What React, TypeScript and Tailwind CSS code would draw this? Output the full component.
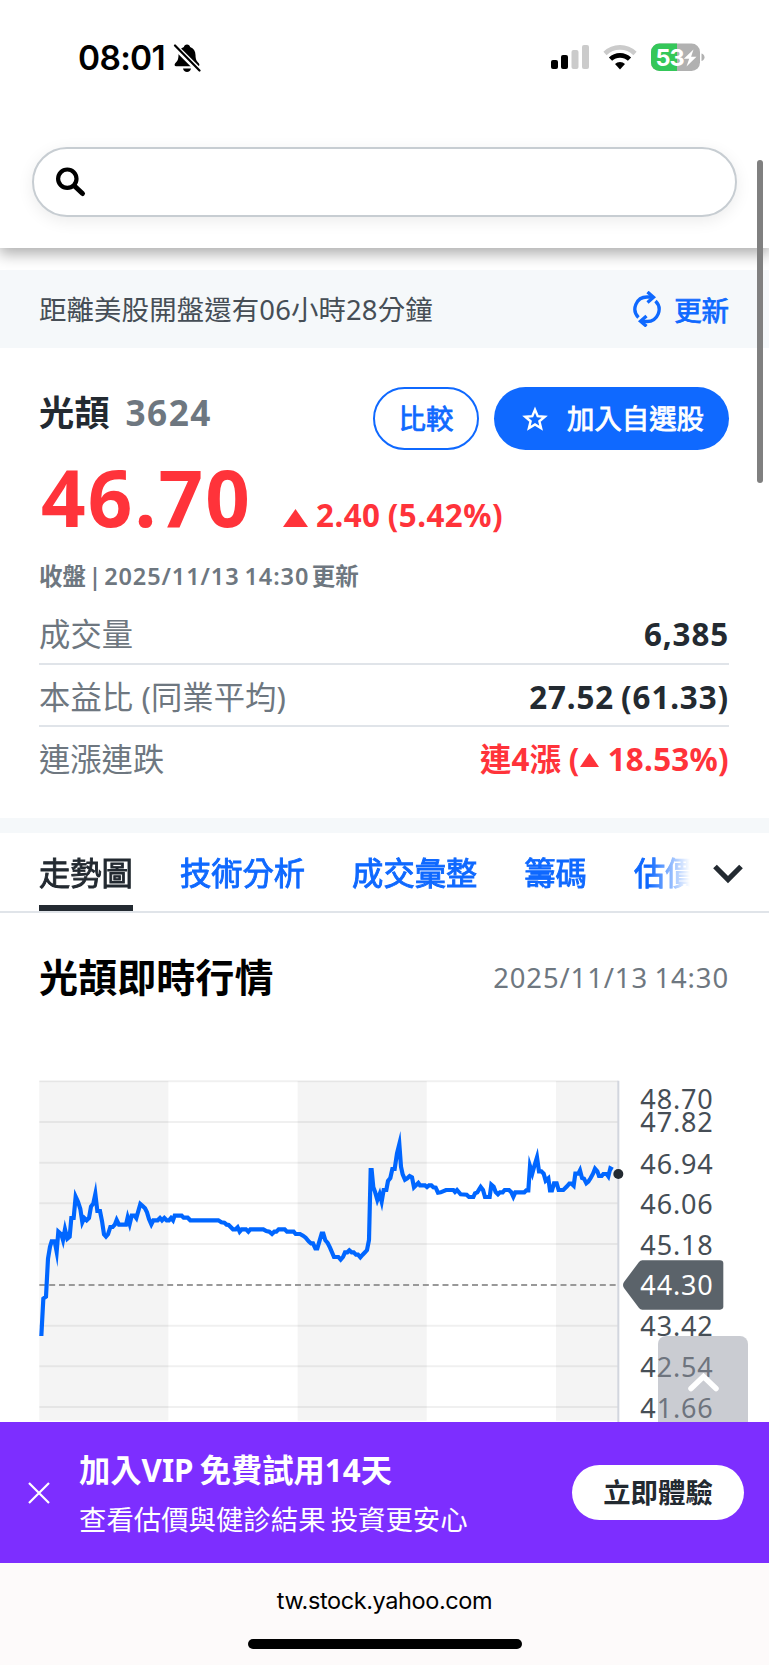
import { useState } from "react";
import clsx from "clsx";

const TABS = ["走勢圖", "技術分析", "成交彙整", "籌碼", "估價"];

const STATS = [
  { label: "成交量", value: "6,385" },
  { label: "本益比 (同業平均)", value: "27.52 (61.33)" },
];

// chart units are a third of a pixel
const GRID_LINES = [64, 186, 308, 430, 552, 797, 919, 1041];

const BANDS = [
  { x: 118, width: 387 },
  { x: 893, width: 387 },
  { x: 1668, width: 187 },
];

const PRICE_LABELS = [
  { y: 148, text: "48.70" },
  { y: 217, text: "47.82" },
  { y: 341, text: "46.94" },
  { y: 462, text: "46.06" },
  { y: 585, text: "45.18" },
  { y: 829, text: "43.42" },
  { y: 950, text: "42.54" },
  { y: 1073, text: "41.66" },
];

const MORNING =
  "124,828 130,716 138,710 144,596 150,560 155,544 164,544 170,575 175,515 184,523 189,540 195,508 202,536 209,530 214,474 221,474 227,410 234,425 241,447 247,487 253,474 260,481 267,474 273,440 280,430 286,402 292,453 300,453 306,483 312,523 318,530 324,523 331,501 338,501 345,493 350,480 357,494 378,494 383,472 389,492 395,467 404,467 409,474 421,432 428,438 435,445 441,457 447,477 454,493 460,481 473,481 480,474 486,481 493,474 500,481 507,481 513,474 519,481 524,467 545,467 551,473 563,473 571,481 655,481 664,487 673,488 680,494 686,495 699,508 707,508 713,502 719,515 725,508 738,508 745,515 751,508 790,508 799,513 808,515 816,522 823,515 829,515 836,508 854,508 861,515 881,515 887,522 900,522 909,527 917,533 926,544 933,550 939,550 946,565 952,565 965,521 970,521 976,541 983,549 990,563 1002,591 1015,591 1022,599 1029,591 1035,577 1042,577 1048,571 1055,577 1061,577 1068,584 1074,584 1081,592 1088,584 1095,577 1101,570 1107,540 1112,330";

const AFTERNOON =
  "1115,330 1120,382 1125,395 1132,420 1139,402 1145,425 1151,390 1159,390 1164,363 1171,354 1177,327 1184,327 1191,280 1198,252 1203,320 1208,343 1215,359 1222,355 1229,348 1236,352 1242,382 1248,376 1255,369 1260,376 1275,376 1281,381 1287,376 1294,376 1300,382 1307,383 1314,398 1322,397 1338,390 1360,390 1365,396 1371,390 1382,403 1400,404 1407,411 1420,411 1425,400 1432,397 1442,381 1449,390 1455,411 1469,411 1474,374 1481,380 1487,396 1494,403 1500,397 1508,397 1514,390 1527,390 1534,397 1540,410 1546,397 1573,397 1579,391 1585,391 1590,318 1597,340 1603,318 1611,292 1617,334 1624,334 1631,341 1637,362 1645,355 1650,391 1656,391 1662,370 1670,370 1676,390 1690,390 1701,379 1708,371 1715,371 1721,377 1726,341 1735,341 1740,331 1746,354 1752,356 1759,370 1765,365 1772,354 1779,341 1785,326 1792,334 1797,348 1805,348 1810,342 1820,342 1825,349 1831,325 1838,329";

function StatusBar() {
  return (
    <div className="flex h-[147px] items-start justify-between pt-[42px] pr-[64px] pl-[78px]">
      <div className="flex items-center">
        <span className="w-[95px] pt-px text-[33.5px] leading-[30px] font-semibold tracking-[-0.7px] text-black font-['Inter',sans-serif]">
          08:01
        </span>
        <svg width="28" height="30" viewBox="0 0 28 30" className="text-black">
          <path
            d="M14 1.6c-1.8 0-2.8 1-3.1 2.4C7.3 5.2 5.6 8.2 5.5 12c-.1 5-1.2 6.2-3.3 8.3-1 1-.8 3 1 3h21.600c1.800 0 2-2 1-3-2.100-2.100-3.200-3.300-3.300-8.300-.1-3.800-1.800-6.800-5.400-8C16.800 2.600 15.800 1.600 14 1.600z"
            fill="currentColor"
          />
          <path d="M10 25.500h8c-.4 2.300-2 3.500-4 3.500s-3.600-1.200-4-3.500z" fill="currentColor" />
          <path d="M1 2.500 27 28.500" stroke="white" strokeWidth="6" />
          <path d="M2 2.500 26.500 27.500" stroke="currentColor" strokeWidth="2.200" strokeLinecap="round" />
        </svg>
      </div>
      <div className="flex items-center">
        <svg width="39" height="30" viewBox="0 0 39 30">
          <rect x="0" y="18" width="7" height="9" rx="2" />
          <rect x="10" y="13" width="7" height="14" rx="2" />
          <rect x="20.500" y="8" width="7" height="19" rx="2" fill="#cbcbcb" />
          <rect x="31" y="3" width="7" height="24" rx="2" fill="#cbcbcb" />
        </svg>
        <svg width="34" height="30" viewBox="0 0 34 30" className="ml-[13px]" fill="none">
          <path d="M2 11.500a21.500 21.500 0 0 1 30 0" stroke="#cbcbcb" strokeWidth="4.600" />
          <path d="M7.500 17.200a13.600 13.600 0 0 1 19 0" stroke="#000" strokeWidth="4.600" />
          <path d="M12 22a7 7 0 0 1 10 0l-5 5.400z" fill="#000" />
        </svg>
        <svg width="54" height="30" viewBox="0 0 54 30" className="ml-[14px]">
          <defs>
            <clipPath id="battery">
              <rect x="0" y="1.500" width="49" height="27.500" rx="8.500" />
            </clipPath>
          </defs>
          <g clipPath="url(#battery)">
            <rect width="54" height="30" fill="#b1b1b1" />
            <rect width="26" height="30" fill="#34c759" />
          </g>
          <path d="M50.500 11.500c2 .6 3 2 3 3.800s-1 3.200-3 3.800z" fill="#b1b1b1" />
          <text
            x="4.500"
            y="23.800"
            fill="white"
            fontSize="23.500"
            fontWeight="700"
            className="font-['Inter',sans-serif]"
            letterSpacing="-0.9"
          >
            53
          </text>
          <path d="M42.500 7.500 32.800 16.700h5.400L35.500 24.500l10-9.800h-5.400z" fill="white" />
        </svg>
      </div>
    </div>
  );
}

function RefreshIcon() {
  return (
    <svg width="28" height="36" viewBox="0 0 28 36" fill="none" stroke="currentColor" strokeWidth="3.300">
      <path d="M5.500 26.500A12 12 0 0 1 14 6h6" />
      <path d="M22.500 10A12 12 0 0 1 14 30.500H8" />
      <path d="m14.500 1 6 5.200-6 5.200M13.500 25l-6 5.300 6 5" />
    </svg>
  );
}

function PriceChart() {
  return (
    <svg
      width="769"
      height="342"
      viewBox="0 60 2307 1026"
      className="block text-[81px] tracking-[2.6px]"
    >
      {BANDS.map((band) => (
        <rect key={band.x} x={band.x} y={63} width={band.width} height={1019} fill="#f4f4f4" />
      ))}
      {GRID_LINES.map((y) => (
        <path key={y} d={`M118 ${y}H1855`} stroke="#000" strokeOpacity="0.06" strokeWidth="6" />
      ))}
      <path d="M1855 62V1086" stroke="#d2d6de" strokeWidth="6" />
      <path d="M118 675H1855" stroke="#999" strokeWidth="6" strokeDasharray="18 11.500" />
      <polyline
        points={`${MORNING} ${AFTERNOON}`}
        fill="none"
        stroke="#0066ff"
        strokeWidth="12.500"
        strokeMiterlimit="10"
      />
      <circle cx="1855" cy="342" r="15" fill="#232a31" />
      {PRICE_LABELS.map((label) => (
        <text key={label.text} x="1921" y={label.y} fill="#464e56">
          {label.text}
        </text>
      ))}
      <path
        d="M1872 666 1917 606q4-5 10-5H2160q10 0 10 10V739q0 10-10 10H1927q-6 0-10-5L1872 684q-6-9 0-18z"
        fill="#5b636a"
      />
      <text x="1921" y="706" fill="white">
        44.30
      </text>
    </svg>
  );
}

export default function App() {
  const [activeTab, setActiveTab] = useState("走勢圖");

  return (
    <div className="relative flex h-[1665px] w-[769px] flex-col overflow-hidden bg-white text-[27.4px] font-['Noto_Sans','Noto_Sans_CJK_TC',sans-serif]">
      {/* Header */}
      <header className="h-[248px] shrink-0 bg-white shadow-[0_5px_14px_1px_rgba(0,0,0,0.32)]">
        <StatusBar />
        <div className="mx-8 flex h-[70px] w-[705px] items-center rounded-full border-2 border-[#c7cdd2] bg-white pl-[21px] shadow-[0_4px_16px_rgba(0,0,0,0.08)]">
          <svg width="32" height="32" viewBox="0 0 32 32" fill="none" stroke="black">
            <circle cx="12.300" cy="12.700" r="9.200" strokeWidth="4.200" />
            <path d="m19.500 20 8 7.500" strokeWidth="5" strokeLinecap="round" />
          </svg>
        </div>
      </header>

      {/* Market notice */}
      <div className="mt-[22px] flex h-[78px] shrink-0 items-center justify-between bg-[#f5f8fa] pr-10 pl-[39px]">
        <span className="pt-[2px] leading-10 tracking-[0.15px] text-[#464e56]">距離美股開盤還有06小時28分鐘</span>
        <button className="flex items-center gap-[13px] text-[#0f69ff] [-webkit-text-stroke:0.8px]">
          <RefreshIcon />
          <span className="pt-[4px] leading-10">更新</span>
        </button>
      </div>

      {/* Quote */}
      <section className="h-[470px] shrink-0 pt-[39px] pr-10 pl-[39px]">
        <div className="flex h-[63px] justify-between">
          <div className="flex items-center gap-4 pb-[13px] text-[35.2px] leading-10">
            <h1 className="font-bold text-[#232a31]">光頡</h1>
            <span className="font-bold tracking-[1.5px] text-[#6e7780]">3624</span>
          </div>
          <div className="flex items-start gap-[15px] [-webkit-text-stroke:0.8px]">
            <button className="h-[63px] w-[106px] rounded-full border-2 border-[#0f69ff] leading-10 text-[#0f69ff]">
              比較
            </button>
            <button className="flex h-[63px] w-[235px] items-center gap-[19px] rounded-full bg-[#0f69ff] pl-[28px] text-white">
              <svg width="26" height="26" viewBox="0 0 26 26" fill="none" stroke="currentColor" strokeWidth="2.400">
                <path d="m13 3.600 2.700 6.600 7.100.5-5.400 4.600 1.700 6.900-6.100-3.800-6.100 3.800 1.700-6.900-5.400-4.600 7.100-.5z" />
              </svg>
              <span className="leading-10">加入自選股</span>
            </button>
          </div>
        </div>
        <div className="flex h-[95px] items-baseline font-bold text-[#ff333a]">
          <span className="w-[244px] pl-[2px] text-[78px] leading-[95px] tracking-[2.1px]">46.70</span>
          <svg width="25" height="18" viewBox="0 0 25 18" fill="currentColor">
            <path d="M12.500 0 25 18H0z" />
          </svg>
          <span className="ml-[8px] text-[31.3px] tracking-[0.5px] [word-spacing:-1.5px]">2.40 (5.42%)</span>
        </div>
        <p className="mt-[11px] text-[23.5px] leading-10 font-semibold text-[#6e7780] [word-spacing:-3.5px]">
          收盤 |{" "}
          <span className="tracking-[0.9px] [word-spacing:-2px]">2025/11/13 14:30</span> 更新
        </p>
        <ul className="mt-[6px] text-[31.3px]">
          {STATS.map((stat) => (
            <li
              key={stat.label}
              className="flex h-[62.5px] items-center justify-between border-b-2 border-[#e0e4e9] pt-[5px]"
            >
              <span className="tracking-[0.1px] text-[#6e7780]">{stat.label}</span>
              <span className="font-bold tracking-[0.9px] text-[#232a31] [word-spacing:-2px]">
                {stat.value}
              </span>
            </li>
          ))}
          <li className="flex h-[62.5px] items-center justify-between pt-[3px]">
            <span className="text-[#6e7780]">連漲連跌</span>
            <span className="flex items-center font-bold tracking-[0.3px] text-[#ff333a] [word-spacing:-1px]">
              連4漲 (
              <svg width="19" height="14" viewBox="0 0 19 14" fill="currentColor" className="mr-[9px]">
                <path d="M9.500 0 19 14H0z" />
              </svg>
              18.53%)
            </span>
          </li>
        </ul>
      </section>

      {/* Tabs */}
      <nav className="flex h-[95px] shrink-0 border-t-[15px] border-b-2 border-t-[#f5f8fa] border-b-[#e0e4e9] pl-[39px]">
        <div className="flex w-[651px] gap-[47px] overflow-hidden text-[31.3px] whitespace-nowrap [-webkit-text-stroke:0.9px] [mask-image:linear-gradient(to_right,black_610px,transparent_651px)]">
          {TABS.map((tab) => (
            <button
              key={tab}
              onClick={() => setActiveTab(tab)}
              className={clsx(
                "h-full shrink-0 border-b-[6px] pt-[8px]",
                activeTab === tab
                  ? "border-[#232a31] text-[#232a31]"
                  : "border-transparent text-[#0f69ff]"
              )}
            >
              {tab}
            </button>
          ))}
        </div>
        <svg width="30" height="20" viewBox="0 0 30 20" fill="none" className="mt-[31px] ml-[23px]">
          <path d="m2 2.500 13 13 13-13" stroke="#232a31" strokeWidth="5.200" />
        </svg>
      </nav>

      {/* Intraday chart */}
      <section className="h-[509px] shrink-0">
        <div className="flex h-[167px] items-start justify-between pt-[39px] pr-10 pl-[39px]">
          <h2 className="text-[39.1px] leading-[50px] font-bold text-black">光頡即時行情</h2>
          <span className="pt-px leading-[50px] tracking-[0.9px] text-[#6e7780] [word-spacing:-1.5px]">
            2025/11/13 14:30
          </span>
        </div>
        <PriceChart />
      </section>

      {/* VIP banner */}
      <div className="flex h-[141px] shrink-0 items-center bg-[#7d2eff] pr-[25px] pl-[28px] text-white">
        <svg width="22" height="22" viewBox="0 0 22 22" stroke="currentColor" strokeWidth="2.200">
          <path d="m1 1 20 20M21 1 1 21" />
        </svg>
        <div className="ml-[29px] flex-1 pt-[4px] [word-spacing:-2px]">
          <p className="text-[31.3px] leading-[50px] font-bold">加入VIP 免費試用14天</p>
          <p className="leading-[50px]">查看估價與健診結果 投資更安心</p>
        </div>
        <button className="h-[55px] w-[172px] rounded-full bg-white leading-10 font-bold text-[#232a31]">
          立即體驗
        </button>
      </div>

      {/* Browser address */}
      <footer className="flex h-[102px] shrink-0 flex-col items-center bg-[#fdfafa]">
        <span className="mt-[23px] text-[23.5px] leading-[30px] tracking-[-0.4px] text-black font-['Inter',sans-serif]">
          tw.stock.yahoo.com
        </span>
        <div className="mt-[23px] h-[10px] w-[274px] rounded-full bg-black" />
      </footer>

      <button className="absolute top-[1336px] left-[658px] flex h-[86px] w-[90px] justify-center rounded-t-lg bg-[#959aa5]/50 pt-[36px]">
        <svg width="31" height="20" viewBox="0 0 31 20" fill="none">
          <path d="m3 16.500 12.500-12 12.500 12" stroke="white" strokeWidth="5.500" strokeLinecap="round" />
        </svg>
      </button>
      <div className="absolute top-[160px] left-[756.5px] h-[323px] w-[6px] rounded-full bg-[#808080]" />
    </div>
  );
}
